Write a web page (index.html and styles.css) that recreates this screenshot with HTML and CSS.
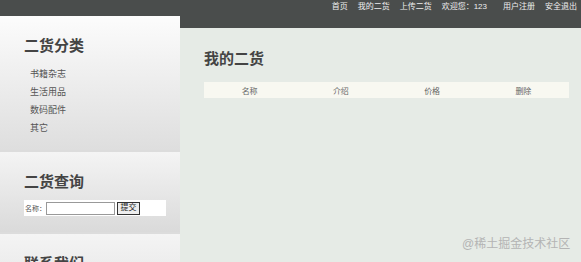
FILE: index.html
```html
<!DOCTYPE html>
<html lang="zh">
<head>
    <meta charset="UTF-8">
    <title>我的二货</title>
    <link rel="stylesheet" href="styles.css">
</head>
<body>
    <div class="header">
        <div class="nav">
            <a href="#">首页</a>
            <a href="#">我的二货</a>
            <a href="#">上传二货</a>
            <span class="welcome">欢迎您：123</span>
            <a href="#">用户注册</a>
            <a href="#">安全退出</a>
        </div>
    </div>

    <div class="wrap">
        <div class="sidebar">
            <div class="panel panel-cat">
                <h2>二货分类</h2>
                <ul class="cat-list">
                    <li><a href="#">书籍杂志</a></li>
                    <li><a href="#">生活用品</a></li>
                    <li><a href="#">数码配件</a></li>
                    <li><a href="#">其它</a></li>
                </ul>
            </div>
            <div class="panel panel-search">
                <h2>二货查询</h2>
                <form class="search-form">
                    <label>名称：</label>
                    <input type="text" class="search-input">
                    <button type="submit" class="search-btn">提交</button>
                </form>
            </div>
            <div class="panel panel-contact">
                <h2>联系我们</h2>
            </div>
        </div>

        <div class="main">
            <h2>我的二货</h2>
            <table class="goods-table">
                <thead>
                    <tr>
                        <th>名称</th>
                        <th>介绍</th>
                        <th>价格</th>
                        <th>删除</th>
                    </tr>
                </thead>
                <tbody>
                </tbody>
            </table>
        </div>
    </div>

    <div class="watermark">@稀土掘金技术社区</div>
</body>
</html>
```

FILE: styles.css
```css
body {
    margin: 0;
    padding: 0;
    height: 262px;
    overflow: hidden;
    font-family: 'Liberation Sans', 'Noto Sans CJK SC', sans-serif;
    background-color: #e6ebe6;
}

a {
    text-decoration: none;
}

.header {
    height: 28px;
    background-color: #4a4d4c;
}

.nav {
    display: flex;
    justify-content: flex-end;
    padding: 1px 4px 0 0;
    font-size: 8px;
    line-height: 11px;
}

.nav a,
.nav .welcome {
    color: #eeeeee;
    margin-left: 10px;
}

.nav .welcome {
    margin-right: 6px;
}

.wrap {
    display: flex;
}

.sidebar {
    width: 180px;
    margin-top: -12px;
    background-color: #dcdcdc;
}

.panel {
    padding: 20px 0 0 24px;
    box-sizing: border-box;
}

.panel h2,
.main h2 {
    margin: 0;
    font-size: 15px;
    line-height: 20px;
    font-weight: bold;
    color: #444;
}

.panel-cat {
    height: 134px;
    background: linear-gradient(#fcfcfc, #dedede);
}

.cat-list {
    list-style: none;
    margin: 9px 0 0 6px;
    padding: 0;
}

.cat-list li {
    font-size: 9px;
    line-height: 18px;
}

.cat-list a {
    color: #555;
}

.panel-search {
    height: 80px;
    margin-top: 2px;
    background: linear-gradient(#f4f4f4, #dadada);
}

.search-form {
    display: flex;
    align-items: center;
    width: 142px;
    height: 16px;
    margin-top: 8px;
    background-color: #fff;
    font-size: 7px;
    color: #555;
}

.search-form label {
    margin-left: 1px;
}

.search-input {
    width: 69px;
    height: 13px;
    margin: 0;
    padding: 0;
    border: 1px solid #999;
    box-sizing: border-box;
}

.search-btn {
    width: 23px;
    height: 13px;
    margin: 0 0 0 2px;
    padding: 0;
    border: 1px solid #333;
    background-color: #eee;
    font-size: 8px;
    line-height: 10px;
    color: #222;
    font-family: inherit;
}

.panel-contact {
    height: 60px;
    margin-top: 2px;
    background: linear-gradient(#f4f4f4, #e6e6e6);
}

.main {
    flex: 1;
    padding: 21px 12px 0 24px;
}

.goods-table {
    width: 100%;
    margin-top: 13px;
    border-collapse: collapse;
}

.goods-table th {
    width: 25%;
    height: 16px;
    padding: 0;
    background-color: #f8f8f1;
    font-size: 8px;
    font-weight: normal;
    color: #666;
}

.watermark {
    position: absolute;
    left: 462px;
    top: 236px;
    font-size: 12px;
    line-height: 16px;
    color: #b4b4b4;
}
```
